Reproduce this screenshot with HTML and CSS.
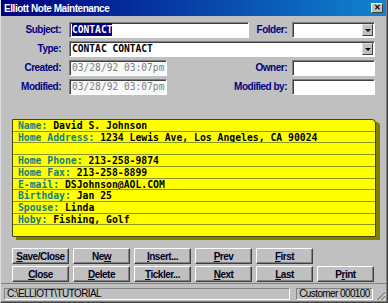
FILE: index.html
```html
<!DOCTYPE html>
<html lang="en">
<head>
  <meta charset="UTF-8">
  <title>Elliott Note Maintenance</title>
  <link rel="stylesheet" href="styles.css">
</head>
<body>

  <div class="window">
    <div class="titlebar">
      <span class="title">Elliott Note Maintenance</span>
      <span class="close">&#x2715;</span>
    </div>

    <div class="fields">
      <div class="label">Subject:</div>
      <div class="field subject"><span class="selected">CONTACT</span></div>
      <div class="label folder-label">Folder:</div>
      <div class="field combo right-col"><span class="arrow"></span></div>

      <div class="label">Type:</div>
      <div class="field combo wide">CONTAC CONTACT<span class="arrow"></span></div>

      <div class="label">Created:</div>
      <div class="field disabled">03/28/92 03:07pm</div>
      <div class="label side-label">Owner:</div>
      <div class="field right-col"></div>

      <div class="label">Modified:</div>
      <div class="field disabled">03/28/92 03:07pm</div>
      <div class="label side-label">Modified by:</div>
      <div class="field right-col"></div>
    </div>

    <div class="card">
      <div class="line"><span class="key">Name:</span> David S. Johnson</div>
      <div class="line"><span class="key">Home Address:</span> 1234 Lewis Ave, Los Angeles, CA 90024</div>
      <div class="line"></div>
      <div class="line"><span class="key">Home Phone:</span> 213-258-9874</div>
      <div class="line"><span class="key">Home Fax:</span> 213-258-8899</div>
      <div class="line"><span class="key">E-mail:</span> DSJohnson@AOL.COM</div>
      <div class="line"><span class="key">Birthday:</span> Jan 25</div>
      <div class="line"><span class="key">Spouse:</span> Linda</div>
      <div class="line"><span class="key">Hoby:</span> Fishing, Golf</div>
      <div class="line"></div>
    </div>

    <div class="buttons">
      <button><u>S</u>ave/Close</button>
      <button>Ne<u>w</u></button>
      <button><u>I</u>nsert...</button>
      <button><u>P</u>rev</button>
      <button><u>F</u>irst</button>
      <span></span>
      <button><u>C</u>lose</button>
      <button><u>D</u>elete</button>
      <button><u>T</u>ickler...</button>
      <button><u>N</u>ext</button>
      <button><u>L</u>ast</button>
      <button>P<u>r</u>int</button>
    </div>

    <div class="statusbar">
      <div class="panel path">C:\ELLIOTT\TUTORIAL</div>
      <div class="panel record">Customer 000100</div>
      <svg class="grip" width="11" height="11" viewBox="0 0 11 11">
        <path d="M10 1 L1 10 M10 5 L5 10 M10 9 L9 10" stroke="#fff" stroke-width="1"/>
        <path d="M10 2 L2 10 M10 6 L6 10" stroke="#808080" stroke-width="1.4"/>
      </svg>
    </div>
  </div>

</body>
</html>
```

FILE: styles.css
```css
html, body {
  margin: 0;
  padding: 0;
  background-color: #c0c0c0;
}
.window {
  width: 388px;
  height: 303px;
  box-sizing: border-box;
  background-color: #c0c0c0;
  border-left: 1px solid #dfdfdf;
  border-right: 1px solid #404040;
  border-bottom: 1px solid #404040;
  box-shadow: inset -1px -1px #808080;
  display: flex;
  flex-direction: column;
  font-family: "Liberation Sans", Arial, sans-serif;
}
.titlebar {
  height: 16px;
  margin-right: 1px;
  background: linear-gradient(to right, #000080, #1084d0);
  display: flex;
  align-items: center;
  padding: 0 3px 0 3px;
}
.title {
  color: #ffffff;
  font-weight: bold;
  font-size: 10px;
  letter-spacing: -0.45px;
}
.close {
  margin-left: auto;
  width: 10px;
  height: 8px;
  background-color: #c0c0c0;
  border: 1px solid;
  border-color: #ffffff #404040 #404040 #ffffff;
  font-size: 8px;
  font-weight: bold;
  line-height: 8px;
  text-align: center;
  color: #000000;
}

/* top form */
.fields {
  margin-top: 6px;
  display: grid;
  grid-template-columns: 60px 8px 98px 82px 38px 5px 83px;
  grid-auto-rows: 16px;
  row-gap: 3px;
}
.label {
  grid-column: 1 / 2;
  text-align: right;
  line-height: 16px;
  font-size: 10px;
  font-weight: bold;
  color: #000080;
  letter-spacing: -0.5px;
  white-space: nowrap;
}
.folder-label {
  grid-column: 5 / 6;
}
.side-label {
  grid-column: 4 / 6;
}
.field {
  grid-column: 3 / 4;
  position: relative;
  box-sizing: border-box;
  background-color: #ffffff;
  border: 1px solid;
  border-color: #808080 #ffffff #ffffff #808080;
  box-shadow: inset 1px 1px #404040;
  padding: 0 0 0 2px;
  font-family: "DejaVu Sans Mono", monospace;
  font-weight: bold;
  font-size: 9.6px;
  line-height: 14px;
  color: #000000;
  white-space: nowrap;
}
.field.subject {
  grid-column: 3 / 5;
}
.field.wide {
  grid-column: 3 / 8;
}
.field.right-col {
  grid-column: 7 / 8;
}
.field.disabled {
  background-color: #f8f8f8;
  color: #808080;
  font-weight: normal;
}
.selected {
  background-color: #000080;
  color: #ffffff;
  padding: 1px 0;
}
.arrow {
  position: absolute;
  right: 1px;
  top: 1px;
  width: 9px;
  height: 10px;
  background-color: #c0c0c0;
  border: 1px solid;
  border-color: #dfdfdf #404040 #404040 #dfdfdf;
}
.arrow::after {
  content: "";
  position: absolute;
  left: 2px;
  top: 4px;
  border-left: 3px solid transparent;
  border-right: 3px solid transparent;
  border-top: 3px solid #000000;
}

/* yellow note card */
.card {
  margin: 24px 0 0 11px;
  width: 364px;
  height: 118px;
  box-sizing: border-box;
  background-color: #ffff00;
  border: 1px solid #44440c;
  border-top-right-radius: 4px;
  box-shadow: 4px 3px 0 #808000;
  display: flex;
  flex-direction: column;
}
.line {
  flex: 1;
  border-bottom: 1px solid #8a961e;
  padding-left: 5px;
  font-family: "DejaVu Sans Mono", monospace;
  font-weight: bold;
  font-size: 9.75px;
  line-height: 11px;
  color: #000000;
  white-space: nowrap;
  overflow: hidden;
}
.line:last-child {
  border-bottom: none;
}
.key {
  color: #138080;
}

/* buttons */
.buttons {
  margin: 11px 0 0 11px;
  display: grid;
  grid-template-columns: repeat(6, 57px);
  grid-auto-rows: 16px;
  column-gap: 4px;
  row-gap: 2px;
}
button {
  margin: 0;
  padding: 0;
  background-color: #c0c0c0;
  border: 1px solid;
  border-color: #ffffff #404040 #404040 #ffffff;
  box-shadow: inset -1px -1px #808080;
  font-family: "Liberation Sans", Arial, sans-serif;
  font-weight: bold;
  font-size: 10px;
  letter-spacing: -0.5px;
  color: #000020;
}

/* status bar */
.statusbar {
  margin: 1px 1px 0 0;
  border-top: 1px solid #808080;
  padding: 4px 0 0 3px;
  display: flex;
  align-items: flex-start;
}
.panel {
  height: 12px;
  box-sizing: border-box;
  border: 1px solid;
  border-color: #808080 #ffffff #ffffff #808080;
  padding-left: 2px;
  font-size: 10px;
  line-height: 10px;
  letter-spacing: -0.6px;
  color: #000000;
  white-space: nowrap;
}
.path {
  width: 287px;
}
.record {
  width: 77px;
  margin-left: 6px;
}
.grip {
  margin: 2px 0 0 2px;
}
```
